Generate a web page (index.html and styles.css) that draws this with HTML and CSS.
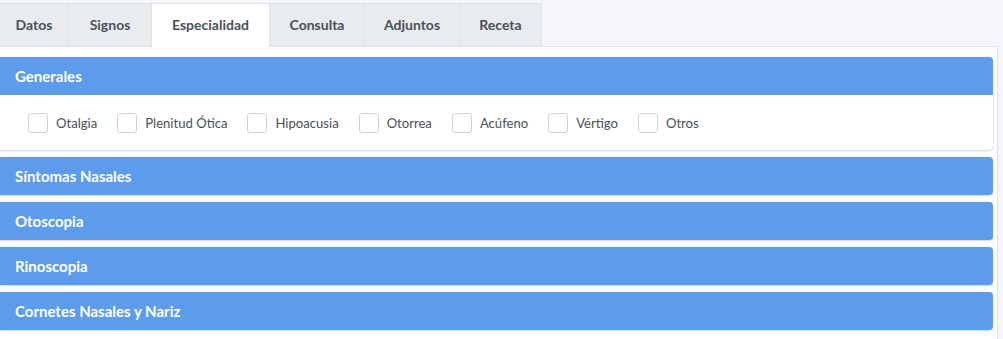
FILE: index.html
```html
<!DOCTYPE html>
<html lang="es">
<head>
    <meta charset="UTF-8">
    <meta name="viewport" content="width=device-width, initial-scale=1.0">
    <title>Historia clínica - Especialidad</title>
    <link rel="stylesheet" href="styles.css">
</head>
<body>
    <ul class="tabs">
        <li class="tab">Datos</li>
        <li class="tab">Signos</li>
        <li class="tab active">Especialidad</li>
        <li class="tab">Consulta</li>
        <li class="tab">Adjuntos</li>
        <li class="tab">Receta</li>
    </ul>

    <div class="tab-content">
        <div class="card">
            <div class="card-header">Generales</div>
            <div class="card-body">
                <label class="check"><span class="box"></span>Otalgia</label>
                <label class="check"><span class="box"></span>Plenitud Ótica</label>
                <label class="check"><span class="box"></span>Hipoacusia</label>
                <label class="check"><span class="box"></span>Otorrea</label>
                <label class="check"><span class="box"></span>Acúfeno</label>
                <label class="check"><span class="box"></span>Vértigo</label>
                <label class="check"><span class="box"></span>Otros</label>
            </div>
        </div>
        <div class="card">
            <div class="card-header">Síntomas Nasales</div>
        </div>
        <div class="card">
            <div class="card-header">Otoscopia</div>
        </div>
        <div class="card">
            <div class="card-header">Rinoscopia</div>
        </div>
        <div class="card">
            <div class="card-header">Cornetes Nasales y Nariz</div>
        </div>
    </div>
</body>
</html>
```

FILE: styles.css
```css
body {
    font-family: 'Lato', 'Liberation Sans', sans-serif;
    background-color: #f4f6f9;
    color: #495057;
    margin: 0;
    padding: 3px 0 0 0;
}
.tabs {
    list-style: none;
    margin: 0;
    padding: 0;
    display: flex;
    background: #f4f6f9;
}
.tab {
    box-sizing: border-box;
    height: 43px;
    line-height: 42px;
    font-size: 14px;
    font-weight: bold;
    color: #495057;
    background: #e9ecef;
    border: 1px solid #dee2e6;
    border-bottom: none;
    margin-right: -1px;
    text-align: center;
    flex: none;
}
.tab:nth-child(1) { width: 69px; border-left: none; }
.tab:nth-child(2) { width: 84px; }
.tab:nth-child(3) { width: 119px; }
.tab:nth-child(4) { width: 96px; }
.tab:nth-child(5) { width: 96px; }
.tab:nth-child(6) { width: 83px; }
.tab.active {
    background: #ffffff;
    position: relative;
    height: 44px;
    margin-bottom: -1px;
}
.tab-content {
    width: 998px;
    min-height: 300px;
    background: #ffffff;
    border-top: 1px solid #dee2e6;
    border-right: 1px solid #dee2e6;
    padding: 10px 0 0 0;
    box-sizing: border-box;
}
.card {
    width: 993px;
    margin-bottom: 7px;
    border-radius: 0 4px 4px 0;
    box-shadow: 0 0 1px rgba(0, 0, 0, 0.2), 0 1px 2px rgba(0, 0, 0, 0.15);
    background: #ffffff;
}
.card-header {
    background: #5d9cec;
    color: #ffffff;
    font-size: 15px;
    font-weight: bold;
    height: 38px;
    line-height: 38px;
    padding-left: 15px;
    border-radius: 0 4px 0 0;
}
.card:not(:first-child) .card-header {
    border-radius: 0 4px 4px 0;
}
.card-body {
    display: flex;
    align-items: center;
    height: 55px;
    padding-left: 28px;
    gap: 20px;
    font-size: 13.1px;
}
.check {
    display: flex;
    align-items: center;
    gap: 8px;
}
.box {
    width: 18px;
    height: 18px;
    border: 1px solid #ced4da;
    border-radius: 3px;
    background: #ffffff;
}
```
